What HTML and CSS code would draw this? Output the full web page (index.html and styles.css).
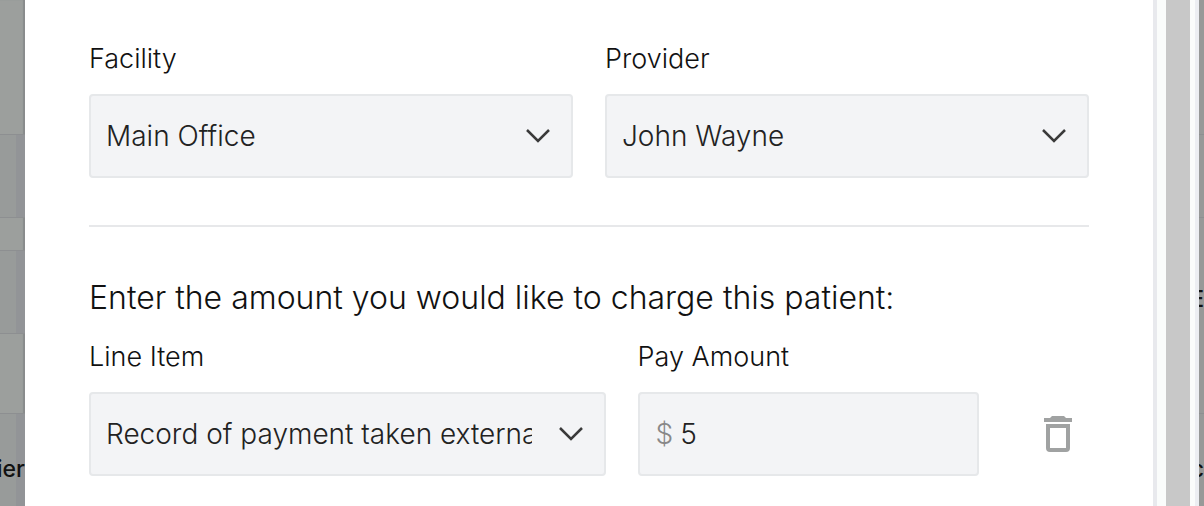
FILE: index.html
```
<!DOCTYPE html>
<html lang="en">
<head>
  <meta charset="UTF-8">
  <meta name="viewport" content="width=device-width, initial-scale=1.0">
  <title>Charge Patient</title>
  <link rel="stylesheet" href="styles.css">
</head>
<body>
  <!-- Dimmed page, left -->
  <div class="backdrop backdrop-left">
    <div class="block tall"></div>
    <div class="block field"></div>
    <div class="block space"></div>
    <div class="block field"></div>
    <div class="block gap"></div>
    <div class="block last"><span class="clipped">ier</span></div>
  </div>

  <main class="dialog">
    <form>
      <div class="row">
        <div class="form-group">
          <label for="facility">Facility</label>
          <div class="select-box">
            <select id="facility" name="facility">
              <option>Main Office</option>
            </select>
            <svg class="chevron" viewBox="0 0 24 14"><path d="M1 1l11 11L23 1"/></svg>
          </div>
        </div>
        <div class="form-group">
          <label for="provider">Provider</label>
          <div class="select-box">
            <select id="provider" name="provider">
              <option>John Wayne</option>
            </select>
            <svg class="chevron" viewBox="0 0 24 14"><path d="M1 1l11 11L23 1"/></svg>
          </div>
        </div>
      </div>

      <hr>

      <h2>Enter the amount you would like to charge this patient:</h2>

      <!-- Line items -->
      <div class="row item-row">
        <div class="form-group">
          <label for="line-item">Line Item</label>
          <div class="select-box">
            <select id="line-item" name="line-item">
              <option>Record of payment taken externally</option>
            </select>
            <svg class="chevron" viewBox="0 0 24 14"><path d="M1 1l11 11L23 1"/></svg>
          </div>
        </div>
        <div class="form-group">
          <label for="amount">Pay Amount</label>
          <div class="money-box">
            <span class="currency">$</span>
            <input type="text" id="amount" name="amount" value="5">
          </div>
        </div>
        <button type="button" class="delete-btn" aria-label="Delete line item">
          <svg width="28" height="36" viewBox="0 0 28 36">
            <path d="M8 0h12l2 2h6v4H0V2h6z"/>
            <path fill-rule="evenodd" d="M2 8h24v24q0 4-4 4H6q-4 0-4-4zM6 12v20h16V12z"/>
          </svg>
        </button>
      </div>
    </form>
  </main>

  <div class="scrollbar"><div class="thumb"></div></div>

  <!-- Dimmed page, right -->
  <div class="backdrop backdrop-right">
    <div class="block tall"></div>
    <div class="block field"></div>
    <div class="block middle"><span class="clipped">E</span></div>
    <div class="block last"><span class="clipped">c</span></div>
  </div>
</body>
</html>
```
FILE: styles.css
```
* {
  margin: 0;
  padding: 0;
  box-sizing: border-box;
}

body {
  display: flex;
  min-height: 100vh;
  overflow: hidden;
  background: #fff;
  color: #111;
  font-family: 'Inter', sans-serif;
  font-weight: 300;
}

/* Dimmed page behind the dialog */
.backdrop {
  display: flex;
  flex-direction: column;
  flex: none;
  overflow: hidden;
  background: #9c9f9d;
}

.backdrop-left {
  width: 25px;
  box-shadow: inset -2px 0 1px #898b8c;
}

.backdrop-right {
  width: 5px;
  background: #979998;
}

.tall {
  height: 134px;
}

.field {
  height: 84px;
  border-top: 1px solid #8d8f91;
  border-bottom: 1px solid #8d8f91;
}

.backdrop-left .field,
.backdrop-left .last {
  background: linear-gradient(to right, #989b9a 16px, #929497 16px);
}

.space {
  height: 32px;
}

.gap {
  height: 79px;
}

.middle {
  height: 195px;
  padding-top: 66px;
}

.last {
  flex: 1;
  padding-top: 40px;
  border-top: 1px solid #8d8f91;
}

.clipped {
  display: flex;
  justify-content: flex-end;
  font-size: 23px;
  font-weight: 500;
  line-height: 30px;
}

/* Dialog */
.dialog {
  flex: 1;
  min-width: 0;
  padding: 41px 64px 30px;
}

.row {
  display: grid;
  grid-template-columns: 1fr 1fr;
  gap: 32px;
}

.item-row {
  grid-template-columns: 516fr 341fr 78px;
}

.form-group {
  min-width: 0;
}

label {
  display: block;
  margin-bottom: 17px;
  font-size: 27px;
  line-height: 36px;
}

hr {
  height: 2px;
  margin: 47px 0 51px;
  border: none;
  background: #e7e8ea;
}

h2 {
  margin-bottom: 21px;
  font-size: 32px;
  font-weight: 300;
  line-height: 40px;
}

select,
.money-box {
  width: 100%;
  height: 84px;
  border: 2px solid #e6e8ea;
  border-radius: 4px;
  background: #f3f4f6;
}

select,
.money-box input {
  color: #222;
  font: inherit;
  font-size: 28px;
}

.select-box {
  display: grid;
  align-items: center;
}

.select-box > * {
  grid-area: 1 / 1;
}

select {
  padding: 0 72px 0 15px;
  appearance: none;
}

.chevron {
  justify-self: end;
  width: 24px;
  height: 14px;
  margin-right: 23px;
  fill: none;
  stroke: #3a3a3a;
  stroke-width: 2.5;
  pointer-events: none;
}

.money-box {
  display: flex;
  align-items: center;
  gap: 7px;
  padding: 0 16px;
  font-size: 28px;
}

.currency {
  color: #888;
}

.money-box input {
  flex: 1;
  min-width: 0;
  border: none;
  background: none;
}

.delete-btn {
  align-self: end;
  justify-self: end;
  display: flex;
  align-items: center;
  justify-content: center;
  width: 62px;
  height: 84px;
  border: none;
  background: none;
  cursor: pointer;
}

.delete-btn svg {
  fill: #a0a2a2;
}

/* Scrollbar */
.scrollbar {
  display: flex;
  flex: none;
  width: 46px;
  padding: 0 5px 0 9px;
  border-left: 4px solid #e8e9ed;
  border-right: 4px solid #eceef2;
  background: #fafcfb;
}

.thumb {
  flex: 1;
  background: #c8c8c8;
}
```
